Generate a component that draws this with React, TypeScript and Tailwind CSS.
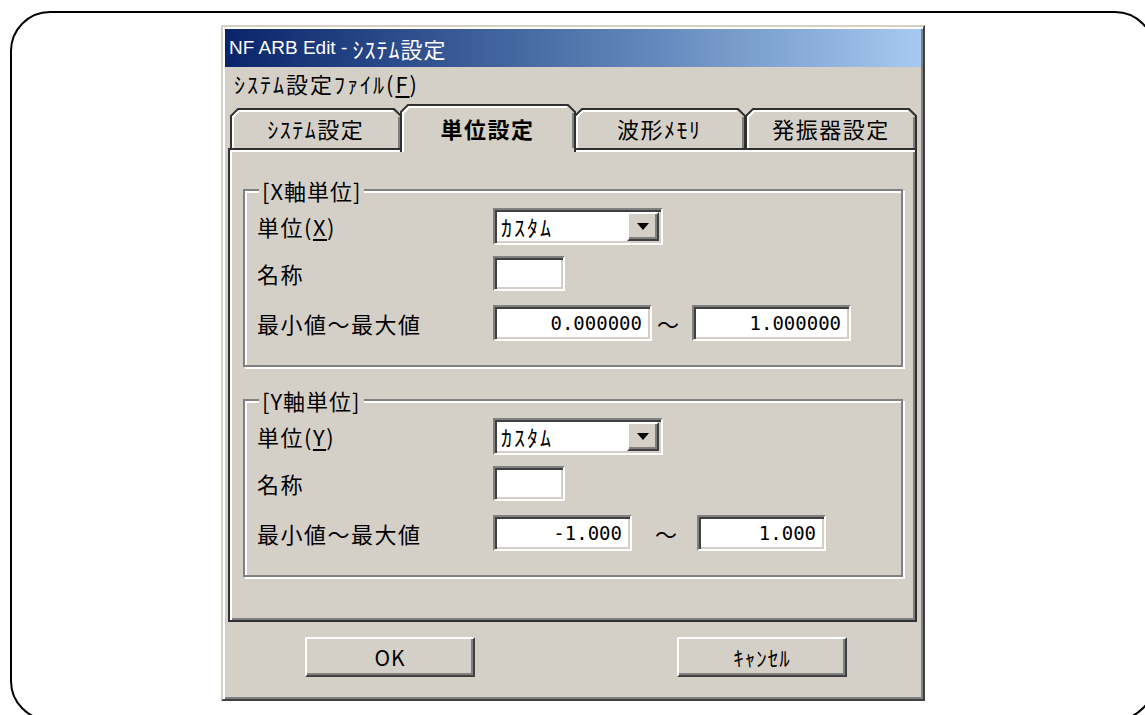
import React from "react";

const font = "font-['Noto_Sans_CJK_JP','Noto_Sans',sans-serif]";

function Sunken({ className = "", children }: { className?: string; children?: React.ReactNode }) {
  return (
    <div
      className={
        "border-2 border-t-[#808080] border-l-[#808080] border-r-white border-b-white bg-white shadow-[inset_2px_2px_0_#404040,inset_-2px_-2px_0_#d4d0c8] " +
        className
      }
    >
      {children}
    </div>
  );
}

function Raised({ className = "", children }: { className?: string; children?: React.ReactNode }) {
  return (
    <div
      className={
        "border-2 border-t-white border-l-white border-r-[#404040] border-b-[#404040] bg-[#d4d0c8] shadow-[inset_-2px_-2px_0_#808080] " +
        className
      }
    >
      {children}
    </div>
  );
}

function Combo() {
  return (
    <Sunken className="w-[170px] h-[37px] flex items-stretch p-[2px]">
      <div className="flex-1 flex items-center pl-[4px] text-[22px] tracking-[2px] text-black">ｶｽﾀﾑ</div>
      <Raised className="w-[32px] flex items-center justify-center">
        <svg width="12" height="7" viewBox="0 0 12 7">
          <path d="M0 0H12L6 7Z" fill="#000" />
        </svg>
      </Raised>
    </Sunken>
  );
}

function NumBox({ value, w }: { value: string; w: number }) {
  return (
    <Sunken className={"h-[36px] flex items-center justify-end pr-[8px] " + (w === 159 ? "w-[159px]" : w === 139 ? "w-[139px]" : "w-[129px]")}>
      <span className="font-['DejaVu_Sans_Mono',monospace] text-[19px] text-black leading-none">{value}</span>
    </Sunken>
  );
}

function Group({
  title,
  axis,
  min,
  max,
  y,
}: {
  title: string;
  axis: string;
  min: string;
  max: string;
  y: boolean;
}) {
  return (
    <fieldset className="border-2 border-[#808080] shadow-[inset_2px_2px_0_#fff,2px_2px_0_#fff] pl-[12px] pr-[12px] pt-[6px] pb-[24px]">
      <legend className="ml-[2px] px-[3px] bg-[#d4d0c8] text-[22px] leading-[24px] tracking-[1px]">{title}</legend>
      <div className="flex items-center h-[37px]">
        <div className="w-[236px] text-[22px] tracking-[1.5px]">
          単位(<span className="underline underline-offset-[3px]">{axis}</span>)
        </div>
        <Combo />
      </div>
      <div className="flex items-center h-[35px] mt-[11px]">
        <div className="w-[236px] text-[22px] tracking-[1.5px]">名称</div>
        <Sunken className="w-[72px] h-[35px]" />
      </div>
      <div className="flex items-center h-[36px] mt-[14px]">
        <div className="w-[236px] text-[22px] tracking-[1.5px]">最小値～最大値</div>
        <NumBox value={min} w={y ? 139 : 159} />
        <span className={"text-[22px] " + (y ? "ml-[23px] mr-[20px]" : "ml-[5px] mr-[13px]")}>～</span>
        <NumBox value={max} w={y ? 129 : 159} />
      </div>
    </fieldset>
  );
}

function Tab({ label, selected = false }: { label: string; selected?: boolean }) {
  const w = selected ? 176 : 172;
  const h = selected ? 48 : 40;
  return (
    <div
      className={
        "relative flex justify-center " +
        (selected ? "w-[176px] h-[48px] -mx-[2px] -mb-[4px] z-10 pt-[10px] font-bold" : "w-[172px] h-[40px] pt-[6px]")
      }
    >
      <svg className="absolute inset-0" width={w} height={h} viewBox={`0 0 ${w} ${h}`}>
        <path d={`M1 ${h}V8L8 1H${w - 8}L${w - 1} 8V${h}`} fill="#d4d0c8" stroke="#303030" strokeWidth="2" />
        <path d={`M3 ${h}V9L9 3H${w - 9}`} fill="none" stroke="#fff" strokeWidth="2" />
        <path d={`M${w - 3} 9V${h - (selected ? 4 : 0)}`} fill="none" stroke="#808080" strokeWidth="2" />
      </svg>
      <span className="relative text-[22px] leading-[28px] tracking-[1.5px]">{label}</span>
    </div>
  );
}

function Button({ label }: { label: string }) {
  return (
    <Raised className="w-[170px] h-[40px] flex items-center justify-center">
      <span className="text-[21px] leading-none tracking-[1px]">{label}</span>
    </Raised>
  );
}

export default function App() {
  return (
    <div className={"w-[1145px] h-[715px] overflow-hidden bg-white text-black " + font}>
      <div className="ml-[10px] mt-[11px] w-[1145px] h-[710px] rounded-[40px] border-2 border-black pt-[12px] pl-[209px]">
        <div className="w-[704px] h-[676px] bg-[#d4d0c8] border-2 border-t-[#d4d0c8] border-l-[#d4d0c8] border-r-[#404040] border-b-[#404040] shadow-[inset_2px_2px_0_#fff,inset_-2px_-2px_0_#808080] p-[2px] flex flex-col">
          <div className="h-[38px] bg-gradient-to-r from-[#0a246a] to-[#a6caf0] flex items-center pl-[4px] text-white">
            <span className="font-['Liberation_Sans',sans-serif] text-[19px] whitespace-pre">NF ARB Edit - </span>
            <span className="text-[22px] tracking-[1px]">ｼｽﾃﾑ設定</span>
          </div>
          <div className="h-[33px] flex items-center pl-[9px] text-[22px] tracking-[2px]">
            ｼｽﾃﾑ設定ﾌｧｲﾙ(<span className="underline underline-offset-[3px]">F</span>)
          </div>
          <div className="flex flex-col pl-[3px] pr-[4px] mt-[4px]">
            <div className="relative z-10 flex items-end h-[44px] pl-[2px]">
              <Tab label="ｼｽﾃﾑ設定" />
              <Tab label="単位設定" selected />
              <Tab label="波形ﾒﾓﾘ" />
              <Tab label="発振器設定" />
            </div>
            <div className="h-[474px] border-2 border-[#303030] shadow-[inset_2px_2px_0_#fff,inset_-2px_-2px_0_#808080] pt-[28px] pl-[13px] pr-[12px] flex flex-col">
              <Group title="[X軸単位]" axis="X" min="0.000000" max="1.000000" y={false} />
              <div className="mt-[21px]">
                <Group title="[Y軸単位]" axis="Y" min="-1.000" max="1.000" y />
              </div>
            </div>
          </div>
          <div className="flex mt-[15px] pl-[80px]">
            <Button label="OK" />
            <div className="ml-[202px]">
              <Button label="ｷｬﾝｾﾙ" />
            </div>
          </div>
        </div>
      </div>
    </div>
  );
}
